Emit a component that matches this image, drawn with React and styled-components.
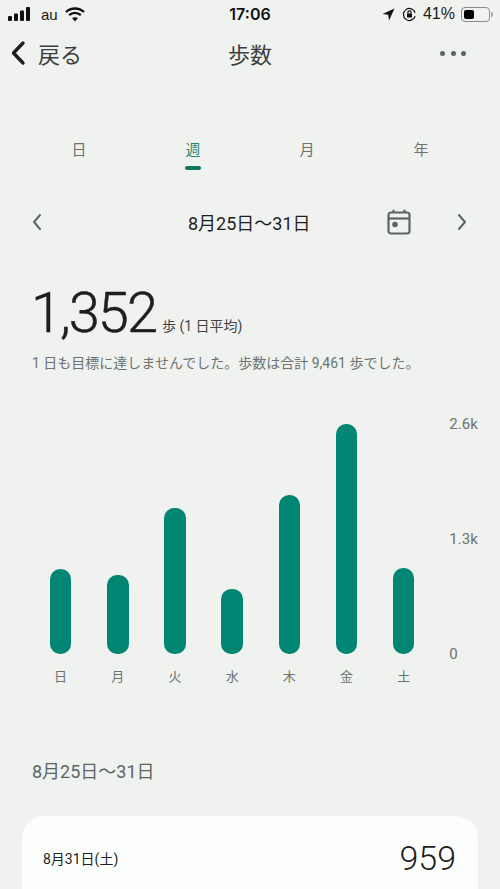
import React from "react";
import styled, { createGlobalStyle } from "styled-components";

const FONT = `Roboto, "Noto Sans CJK JP", sans-serif`;

const TABS = ["日", "週", "月", "年"];
const BARS = [
  { day: "日", height: 85 },
  { day: "月", height: 79 },
  { day: "火", height: 146 },
  { day: "水", height: 65 },
  { day: "木", height: 159 },
  { day: "金", height: 230 },
  { day: "土", height: 86 },
];

export default function App() {
  return (
    <Page>
      <GlobalStyle />
      <StatusBar>
        <StatusSide>
          <SignalBars />
          <Carrier>au</Carrier>
          <WifiIcon />
        </StatusSide>
        <Clock>17:06</Clock>
        <StatusSide $right>
          <LocationIcon />
          <RotationIcon />
          <Percent>41%</Percent>
          <Battery />
        </StatusSide>
      </StatusBar>

      <NavBar>
        <BackLink>
          <svg width="16" height="26" viewBox="0 0 16 26" fill="none">
            <path d="M13 3 L3.5 13 L13 23" stroke="#1d1f1e" strokeWidth="3.4" strokeLinecap="round" strokeLinejoin="round" />
          </svg>
          <BackLabel>戻る</BackLabel>
        </BackLink>
        <NavTitle>歩数</NavTitle>
        <MoreDots>
          <Dot />
          <Dot />
          <Dot />
        </MoreDots>
      </NavBar>

      <Tabs>
        {TABS.map((tab) => (
          <Tab key={tab} $active={tab === "週"}>{tab}</Tab>
        ))}
      </Tabs>

      <DateRow>
        <Chevron d="M10 3 L4 10 L10 17" />
        <DateTitle>8月25日〜31日</DateTitle>
        <CalendarIcon />
        <Chevron d="M4 3 L10 10 L4 17" />
      </DateRow>

      <Summary>
        <BigNumber>1,352</BigNumber>
        <Unit>歩 (1 日平均)</Unit>
      </Summary>
      <Note>1 日も目標に達しませんでした。歩数は合計 9,461 歩でした。</Note>

      <Chart>
        <Plot>
          {BARS.map((bar) => (
            <Column key={bar.day}>
              <BarSlot>
                <Bar style={{ height: bar.height }} />
              </BarSlot>
              <DayLabel>{bar.day}</DayLabel>
            </Column>
          ))}
        </Plot>
        <Axis>
          <span>2.6k</span>
          <span>1.3k</span>
          <span>0</span>
        </Axis>
      </Chart>

      <SectionTitle>8月25日〜31日</SectionTitle>

      <Card>
        <CardDate>8月31日(土)</CardDate>
        <CardValue>959</CardValue>
      </Card>
    </Page>
  );
}

function SignalBars() {
  return (
    <svg width="24" height="14" viewBox="0 0 24 14" fill="#111">
      <rect x="0" y="9" width="4" height="5" rx="1" />
      <rect x="6" y="6.5" width="4" height="7.5" rx="1" />
      <rect x="12" y="3.5" width="4" height="10.5" rx="1" />
      <rect x="18" y="0" width="4" height="14" rx="1" />
    </svg>
  );
}

function WifiIcon() {
  return (
    <svg width="20" height="15" viewBox="0 0 20 15" fill="none" stroke="#111" strokeWidth="2.3">
      <path d="M1 5 C6 0.3 14 0.3 19 5" />
      <path d="M4.2 8.2 C7.5 5.2 12.5 5.2 15.8 8.2" />
      <path d="M10 14.5 L7 11.1 C8.6 9.9 11.4 9.9 13 11.1 Z" fill="#111" stroke="none" />
    </svg>
  );
}

function LocationIcon() {
  return (
    <svg width="13" height="13" viewBox="0 0 13 13" fill="#111">
      <path d="M12.5 0.5 L0.5 6 L6.2 6.8 L7 12.5 Z" />
    </svg>
  );
}

function RotationIcon() {
  return (
    <svg width="15" height="15" viewBox="0 0 15 15" fill="none" stroke="#111" strokeWidth="1.2">
      <path d="M13.2 9.2 A6 6 0 1 1 13.2 5.8" />
      <rect x="5" y="6.6" width="5" height="4" rx="0.6" fill="#111" stroke="none" />
      <path d="M5.9 6.8 V5.4 A1.6 1.6 0 0 1 9.1 5.4 V6.8" />
    </svg>
  );
}

function Battery() {
  return (
    <BatteryBody>
      <BatteryLevel />
    </BatteryBody>
  );
}

function Chevron({ d }) {
  return (
    <svg width="14" height="20" viewBox="0 0 14 20" fill="none">
      <path d={d} stroke="#5b6662" strokeWidth="2" strokeLinecap="round" strokeLinejoin="round" />
    </svg>
  );
}

function CalendarIcon() {
  return (
    <CalendarWrap width="24" height="26" viewBox="0 0 24 26" fill="none">
      <rect x="1.5" y="3.5" width="21" height="21" rx="2.5" stroke="#5b6662" strokeWidth="2.2" />
      <path d="M1.5 9.5 H22.5" stroke="#5b6662" strokeWidth="2.2" />
      <path d="M6.5 0.8 V4 M17.5 0.8 V4" stroke="#5b6662" strokeWidth="2.2" />
      <circle cx="8" cy="15.5" r="2.8" fill="#5b6662" />
    </CalendarWrap>
  );
}

const GlobalStyle = createGlobalStyle`
  html, body {
    margin: 0;
    padding: 0;
    background: #f0f2ef;
    overflow: hidden;
  }
`;

const Page = styled.div`
  width: 500px;
  height: 889px;
  overflow: hidden;
  background: #f0f2ef;
  font-family: ${FONT};
  color: #1d1f1e;
`;

const StatusBar = styled.div`
  height: 28px;
  padding: 0 8px;
  display: grid;
  grid-template-columns: 1fr auto 1fr;
  align-items: center;
`;

const StatusSide = styled.div`
  display: flex;
  align-items: center;
  gap: 7px;
  justify-content: ${(p) => (p.$right ? "flex-end" : "flex-start")};
`;

const Carrier = styled.span`
  font-size: 15px;
  font-family: "Liberation Sans", sans-serif;
  color: #1a1a1a;
  margin-left: 2px;
`;

const Clock = styled.span`
  font-size: 16px;
  font-weight: 600;
  font-family: Inter, sans-serif;
  color: #111;
`;

const Percent = styled.span`
  font-size: 16px;
  font-family: "Liberation Sans", sans-serif;
  color: #1a1a1a;
  margin: 0 -1px;
`;

const BatteryBody = styled.div`
  position: relative;
  box-sizing: border-box;
  width: 29px;
  height: 15px;
  padding: 2px;
  margin-right: 2px;
  border: 1px solid #8b8d8b;
  border-radius: 4px;
  &::after {
    content: "";
    position: absolute;
    right: -4px;
    top: 4px;
    width: 2px;
    height: 5px;
    border-radius: 0 2px 2px 0;
    background: #a5a7a5;
  }
`;

const BatteryLevel = styled.div`
  width: 10px;
  height: 100%;
  border-radius: 2px;
  background: #000;
`;

const NavBar = styled.div`
  height: 50px;
  padding: 0 34px 0 10px;
  display: grid;
  grid-template-columns: 1fr auto 1fr;
  align-items: center;
`;

const BackLink = styled.div`
  display: flex;
  align-items: center;
  gap: 12px;
`;

const BackLabel = styled.span`
  font-size: 22px;
  color: #3c3f3e;
`;

const NavTitle = styled.span`
  font-size: 22px;
  color: #3c3f3e;
  position: relative;
  left: 12px;
`;

const MoreDots = styled.div`
  display: flex;
  justify-content: flex-end;
  gap: 5.5px;
`;

const Dot = styled.span`
  width: 5px;
  height: 5px;
  border-radius: 50%;
  background: #5b6662;
`;

const Tabs = styled.div`
  margin-top: 61px;
  padding: 0 22px;
  display: grid;
  grid-template-columns: repeat(4, 1fr);
  justify-items: center;
`;

const Tab = styled.div`
  position: relative;
  font-size: 15px;
  line-height: 22px;
  height: 40px;
  color: ${(p) => (p.$active ? "#1f8a75" : "#6c7370")};
  ${(p) =>
    p.$active &&
    `
    &::after {
      content: "";
      position: absolute;
      left: 0;
      right: 0;
      top: 27px;
      height: 4px;
      border-radius: 2px;
      background: #0c7562;
    }
  `}
`;

const DateRow = styled.div`
  margin-top: 23px;
  padding: 0 30px;
  height: 40px;
  display: flex;
  align-items: center;
`;

const DateTitle = styled.div`
  margin-left: 144px;
  font-size: 18px;
  font-weight: 400;
  white-space: nowrap;
  width: 199px;
`;

const CalendarWrap = styled.svg`
  margin-right: 44px;
`;

const Summary = styled.div`
  margin-top: 40px;
  padding-left: 31px;
  display: flex;
  align-items: baseline;
  gap: 6px;
`;

const BigNumber = styled.span`
  font-size: 56px;
  line-height: 62px;
  font-weight: 300;
  letter-spacing: -2px;
  color: #1d1f1e;
  -webkit-text-stroke: 0.5px #1d1f1e;
`;

const Unit = styled.span`
  font-size: 14px;
  color: #3f4543;
  position: relative;
  top: -1px;
`;

const Note = styled.div`
  margin-top: 9px;
  padding-left: 32px;
  font-size: 14px;
  line-height: 20px;
  color: #6c7370;
  white-space: nowrap;
`;

const Chart = styled.div`
  margin-top: 51px;
  padding-left: 32px;
  display: flex;
  align-items: flex-start;
`;

const Plot = styled.div`
  display: grid;
  grid-template-columns: repeat(7, 57.2px);
`;

const Column = styled.div`
  display: flex;
  flex-direction: column;
  align-items: center;
`;

const BarSlot = styled.div`
  height: 230px;
  display: flex;
  align-items: flex-end;
`;

const Bar = styled.div`
  width: 21.5px;
  border-radius: 10px;
  background: #008673;
`;

const DayLabel = styled.div`
  margin-top: 14px;
  font-size: 13px;
  line-height: 18px;
  color: #6c7370;
`;

const Axis = styled.div`
  margin-left: 17px;
  margin-top: -9px;
  height: 248px;
  display: flex;
  flex-direction: column;
  justify-content: space-between;
  font-size: 15px;
  line-height: 18px;
  color: #6c7370;
`;

const SectionTitle = styled.div`
  margin-top: 74px;
  padding-left: 32px;
  font-size: 18px;
  line-height: 24px;
  color: #5b6662;
`;

const Card = styled.div`
  margin: 32px 22px 0;
  height: 200px;
  padding: 26px 22px 26px 21px;
  box-sizing: border-box;
  border-radius: 22px;
  background: #fcfefc;
  display: flex;
  justify-content: space-between;
  align-items: flex-start;
`;

const CardDate = styled.div`
  margin-top: 8px;
  font-size: 14px;
  line-height: 18px;
  color: #1d1f1e;
`;

const CardValue = styled.div`
  font-size: 34px;
  line-height: 32px;
  font-weight: 300;
`;
